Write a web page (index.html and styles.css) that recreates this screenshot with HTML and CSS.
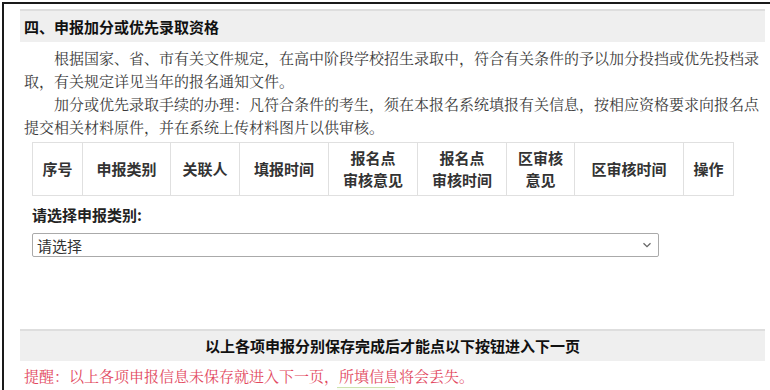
FILE: index.html
```html
<!DOCTYPE html>
<html lang="zh-CN">
<head>
  <meta charset="UTF-8">
  <title>申报加分或优先录取资格</title>
  <link rel="stylesheet" href="styles.css">
</head>
<body>
  <div class="frame">
    <div class="section">
      <div class="section-title">四、申报加分或优先录取资格</div>
      <div class="notice">
        <p>根据国家、省、市有关文件规定，在高中阶段学校招生录取中，符合有关条件的予以加分投挡或优先投档录取，有关规定详见当年的报名通知文件。</p>
        <p>加分或优先录取手续的办理：凡符合条件的考生，须在本报名系统填报有关信息，按相应资格要求向报名点提交相关材料原件，并在系统上传材料图片以供审核。</p>
      </div>

      <table class="apply-table">
        <colgroup>
          <col style="width:50px">
          <col style="width:88px">
          <col style="width:69px">
          <col style="width:89px">
          <col style="width:89px">
          <col style="width:89px">
          <col style="width:68px">
          <col style="width:109px">
          <col style="width:50px">
        </colgroup>
        <tr>
          <th>序号</th>
          <th>申报类别</th>
          <th>关联人</th>
          <th>填报时间</th>
          <th>报名点<br>审核意见</th>
          <th>报名点<br>审核时间</th>
          <th>区审核<br>意见</th>
          <th>区审核时间</th>
          <th>操作</th>
        </tr>
      </table>

      <div class="apply-form">
        <label class="form-label" for="applyType">请选择申报类别:</label>
        <div class="select-box">
          <span id="applyType">请选择</span>
          <svg class="chevron" width="10" height="6" viewBox="0 0 10 6">
            <path d="M1.5 1.2 L5 4.6 L8.5 1.2" fill="none" stroke="#666" stroke-width="1.3"/>
          </svg>
        </div>
      </div>

      <div class="bottom-bar">以上各项申报分别保存完成后才能点以下按钮进入下一页</div>
      <div class="warn">提醒：以上各项申报信息未保存就进入下一页，所填信息将会丢失。</div>
      <div class="next-row"><span class="next-btn"></span></div>
    </div>
  </div>
</body>
</html>
```

FILE: styles.css
```css
html, body {
  margin: 0;
  padding: 0;
  background: #fff;
  overflow: hidden;
}
.frame {
  margin: 2px 0 0 2px;
  border-top: 2px solid #1a1a1a;
  border-left: 2px solid #1a1a1a;
  height: 400px;
}
.section {
  margin-left: 16px;
  width: 745px;
  padding-top: 5px;
  font-family: "Noto Sans CJK SC", sans-serif;
  color: #222;
}
.section-title {
  background-color: #efefef;
  border-top: 2px solid #dedede;
  height: 31px;
  line-height: 32px;
  padding-left: 4px;
  font-size: 15px;
  font-weight: bold;
  color: #111;
}
.notice {
  margin-top: 4px;
  padding-left: 4px;
  width: 740px;
  font-family: "Noto Serif CJK SC", "Liberation Serif", serif;
  font-size: 15px;
  line-height: 23px;
  color: #3a3a3a;
}
.notice p {
  margin: 0;
  text-indent: 2em;
}
.apply-table {
  margin: 4px 0 0 12px;
  border-collapse: collapse;
  table-layout: fixed;
  width: 701px;
}
.apply-table th {
  border: 1px solid #e0e0e0;
  height: 52px;
  padding: 0;
  font-size: 15px;
  line-height: 22px;
  font-weight: bold;
  color: #333;
  text-align: center;
}
.apply-form {
  margin: 8px 0 0 12px;
}
.form-label {
  display: block;
  font-size: 15px;
  line-height: 22px;
  font-weight: bold;
  color: #222;
}
.select-box {
  margin-top: 7px;
  height: 22px;
  border: 1px solid #aaa;
  border-radius: 2px;
  display: flex;
  align-items: center;
  justify-content: space-between;
  padding: 0 6px 0 4px;
  width: 615px;
  font-size: 15px;
  color: #333;
}
.chevron {
  display: block;
}
.bottom-bar {
  margin-top: 72px;
  background-color: #efefef;
  border-top: 2px solid #dedede;
  height: 30px;
  line-height: 30px;
  text-align: center;
  font-size: 15px;
  font-weight: bold;
  color: #111;
}
.warn {
  margin-top: 3px;
  padding-left: 4px;
  font-family: "Noto Serif CJK SC", "Liberation Serif", serif;
  font-size: 15px;
  line-height: 23px;
  color: #e2485e;
}
.next-row {
  padding-left: 317px;
}
.next-btn {
  display: block;
  width: 58px;
  height: 20px;
  border-top: 1px solid #cfe2b0;
  background: #fbfdf6;
}
```
